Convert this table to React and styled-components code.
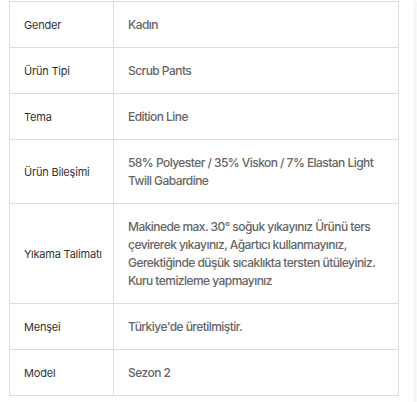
import React from "react";
import styled, { createGlobalStyle } from "styled-components";

const Global = createGlobalStyle`
  html, body { margin: 0; padding: 0; background: #fff; }
  body { font-family: Inter, "Noto Sans", sans-serif; }
`;

const Page = styled.div`
  display: flex;
  width: 417px;
  height: 402px;
  box-sizing: border-box;
  padding: 1px 0 0 9px;
`;

const Main = styled.div`
  flex: 1;
`;

const Strip = styled.div`
  width: 3px;
  margin-left: 15px;
  background: #f9f9f9;
  border-left: 1px solid #eeeeee;
`;

const Table = styled.table`
  width: 390px;
  border-collapse: collapse;
  table-layout: fixed;
`;

const Label = styled.th`
  width: 104px;
  box-sizing: border-box;
  border: 1px solid #dddddd;
  padding: 13.5px 10px 13.5px 14px;
  text-align: left;
  vertical-align: middle;
  font-weight: 400;
  font-size: 11px;
  line-height: 18px;
  color: #333333;
  letter-spacing: -0.2px;
`;

const Value = styled.td`
  border: 1px solid #dddddd;
  padding: 13.5px 12px 13.5px 14px;
  vertical-align: middle;
  font-size: 12px;
  line-height: 18px;
  font-weight: 500;
  color: #666666;
  letter-spacing: -0.55px;
`;

const rows = [
  ["Gender", "Kadın"],
  ["Ürün Tipi", "Scrub Pants"],
  ["Tema", "Edition Line"],
  ["Ürün Bileşimi", "58% Polyester / 35% Viskon / 7% Elastan Light Twill Gabardine"],
  [
    "Yıkama Talimatı",
    "Makinede max. 30° soğuk yıkayınız Ürünü ters çevirerek yıkayınız, Ağartıcı kullanmayınız, Gerektiğinde düşük sıcaklıkta tersten ütüleyiniz. Kuru temizleme yapmayınız",
  ],
  ["Menşei", "Türkiye'de üretilmiştir."],
  ["Model", "Sezon 2"],
];

export default function App() {
  return (
    <>
      <Global />
      <Page>
        <Main>
          <Table>
            <tbody>
              {rows.map(([k, v]) => (
                <tr key={k}>
                  <Label>{k}</Label>
                  <Value>{v}</Value>
                </tr>
              ))}
            </tbody>
          </Table>
        </Main>
        <Strip />
      </Page>
    </>
  );
}
